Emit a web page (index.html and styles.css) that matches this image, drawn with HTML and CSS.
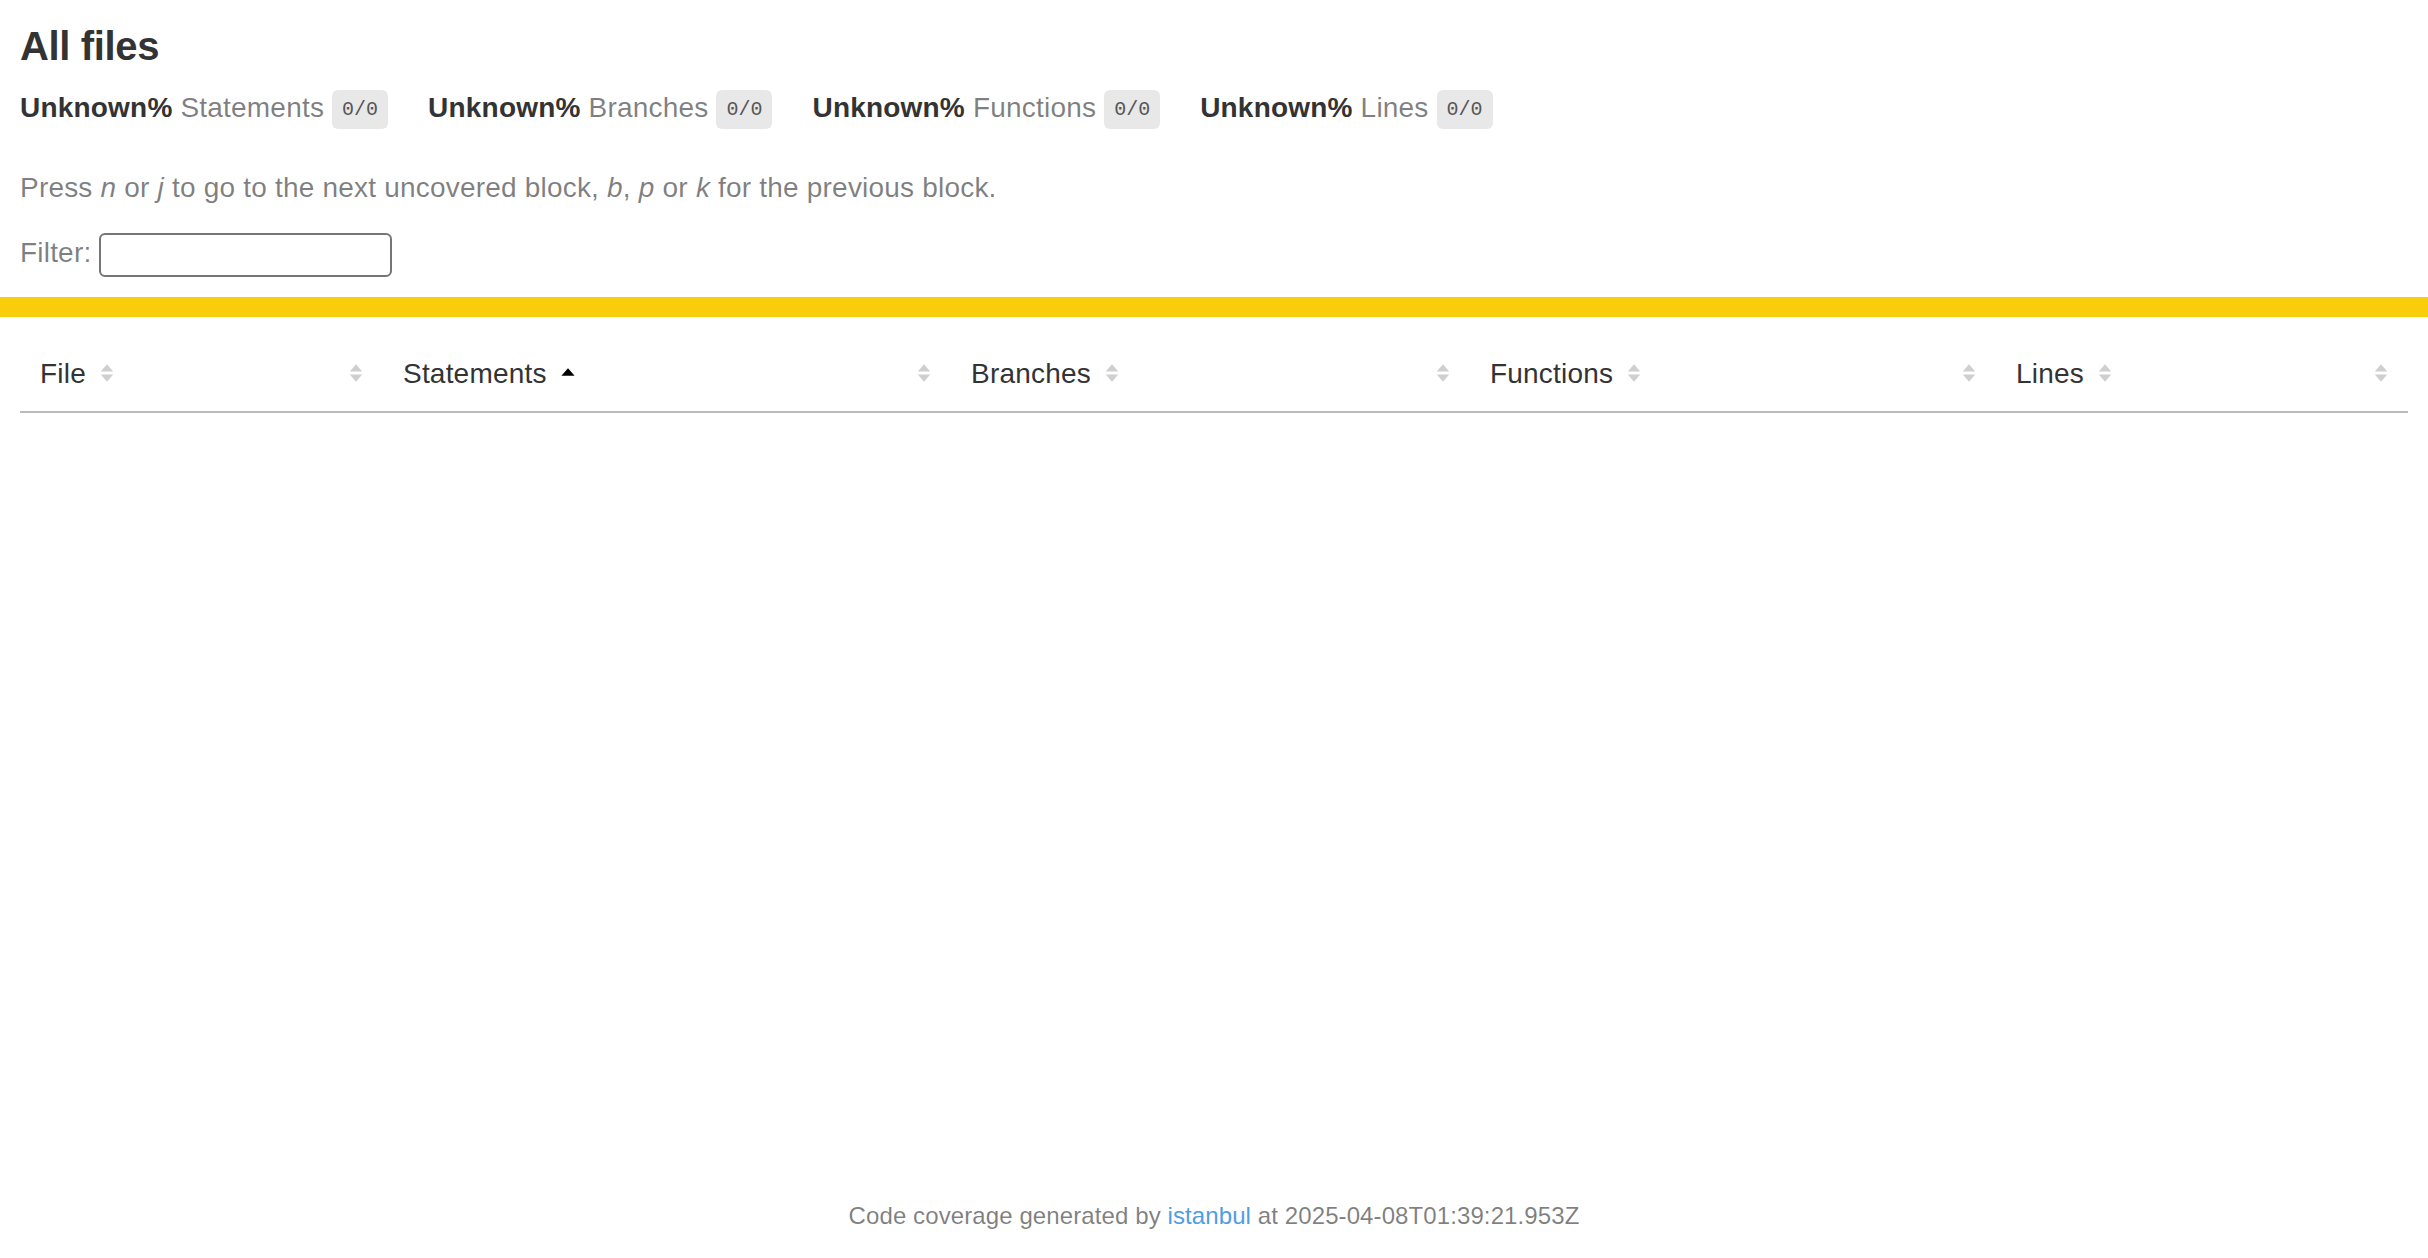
FILE: index.html
```html
<!doctype html>
<html lang="en">
<head>
<meta charset="utf-8">
<title>Code coverage report for All files</title>
<link rel="stylesheet" href="styles.css">
</head>
<body>
<div class="wrapper">
  <div class="pad1">
    <h1>All files</h1>
    <div class="clearfix">
      <div class="fl pad1y space-right2">
        <span class="strong">Unknown% </span>
        <span class="quiet">Statements</span>
        <span class="fraction">0/0</span>
      </div>
      <div class="fl pad1y space-right2">
        <span class="strong">Unknown% </span>
        <span class="quiet">Branches</span>
        <span class="fraction">0/0</span>
      </div>
      <div class="fl pad1y space-right2">
        <span class="strong">Unknown% </span>
        <span class="quiet">Functions</span>
        <span class="fraction">0/0</span>
      </div>
      <div class="fl pad1y space-right2">
        <span class="strong">Unknown% </span>
        <span class="quiet">Lines</span>
        <span class="fraction">0/0</span>
      </div>
    </div>
    <p class="quiet keys">
      Press <em>n</em> or <em>j</em> to go to the next uncovered block, <em>b</em>, <em>p</em> or <em>k</em> for the previous block.
    </p>
    <div class="quiet filter">
      Filter:
      <input type="search" class="file-search">
    </div>
  </div>
  <div class="status-line medium"></div>
  <div class="pad1">
    <table class="coverage-summary">
      <colgroup>
        <col class="c-file">
        <col class="c-pic">
        <col class="c-s-pct">
        <col class="c-s-abs">
        <col class="c-b-pct">
        <col class="c-b-abs">
        <col class="c-f-pct">
        <col class="c-f-abs">
        <col class="c-l-pct">
        <col class="c-l-abs">
      </colgroup>
      <thead>
        <tr>
          <th class="file">File<span class="sorter"><svg viewBox="0 0 7 10" width="14" height="20"><polygon class="ar" points="3.5,0.6 6.6,4.2 0.4,4.2"/><polygon class="ar" points="0.4,5.8 6.6,5.8 3.5,9.4"/></svg></span></th>
          <th class="pic"><span class="sorter"><svg viewBox="0 0 7 10" width="14" height="20"><polygon class="ar" points="3.5,0.6 6.6,4.2 0.4,4.2"/><polygon class="ar" points="0.4,5.8 6.6,5.8 3.5,9.4"/></svg></span></th>
          <th class="pct sorted">Statements<span class="sorter"><svg viewBox="0 0 7 10" width="14" height="20"><polygon class="ak" points="3.5,2.6 6.8,6.4 0.2,6.4"/></svg></span></th>
          <th class="abs"><span class="sorter"><svg viewBox="0 0 7 10" width="14" height="20"><polygon class="ar" points="3.5,0.6 6.6,4.2 0.4,4.2"/><polygon class="ar" points="0.4,5.8 6.6,5.8 3.5,9.4"/></svg></span></th>
          <th class="pct">Branches<span class="sorter"><svg viewBox="0 0 7 10" width="14" height="20"><polygon class="ar" points="3.5,0.6 6.6,4.2 0.4,4.2"/><polygon class="ar" points="0.4,5.8 6.6,5.8 3.5,9.4"/></svg></span></th>
          <th class="abs"><span class="sorter"><svg viewBox="0 0 7 10" width="14" height="20"><polygon class="ar" points="3.5,0.6 6.6,4.2 0.4,4.2"/><polygon class="ar" points="0.4,5.8 6.6,5.8 3.5,9.4"/></svg></span></th>
          <th class="pct">Functions<span class="sorter"><svg viewBox="0 0 7 10" width="14" height="20"><polygon class="ar" points="3.5,0.6 6.6,4.2 0.4,4.2"/><polygon class="ar" points="0.4,5.8 6.6,5.8 3.5,9.4"/></svg></span></th>
          <th class="abs"><span class="sorter"><svg viewBox="0 0 7 10" width="14" height="20"><polygon class="ar" points="3.5,0.6 6.6,4.2 0.4,4.2"/><polygon class="ar" points="0.4,5.8 6.6,5.8 3.5,9.4"/></svg></span></th>
          <th class="pct">Lines<span class="sorter"><svg viewBox="0 0 7 10" width="14" height="20"><polygon class="ar" points="3.5,0.6 6.6,4.2 0.4,4.2"/><polygon class="ar" points="0.4,5.8 6.6,5.8 3.5,9.4"/></svg></span></th>
          <th class="abs"><span class="sorter"><svg viewBox="0 0 7 10" width="14" height="20"><polygon class="ar" points="3.5,0.6 6.6,4.2 0.4,4.2"/><polygon class="ar" points="0.4,5.8 6.6,5.8 3.5,9.4"/></svg></span></th>
        </tr>
      </thead>
      <tbody></tbody>
    </table>
  </div>
  <div class="push"></div>
</div>
<div class="footer quiet pad2 center small">
  Code coverage generated by
  <a href="#">istanbul</a>
  at 2025-04-08T01:39:21.953Z
</div>
</body>
</html>
```

FILE: styles.css
```css
*, *:after, *:before { box-sizing: border-box; }
html, body { margin: 0; padding: 0; height: 100%; }
body {
  font-family: "Liberation Sans", Arial, Helvetica, sans-serif;
  font-size: 28px;
  letter-spacing: 0.2px;
  color: #333;
  background: #fff;
}
.small { font-size: 24px; letter-spacing: 0.1px; }
h1 { font-size: 40px; line-height: 52px; margin: 0; letter-spacing: -0.35px; }
a { color: #0074D9; text-decoration: none; }
.strong { font-weight: bold; }
.pad1y { padding: 20px 0; }
.pad2 { padding: 40px; }
.pad1 { padding: 20px; }
.space-right2 { padding-right: 40px; }
.center { text-align: center; }
.clearfix { display: block; }
.clearfix:after { content: ''; display: block; height: 0; clear: both; visibility: hidden; }
.fl { float: left; }
.quiet { color: rgba(0,0,0,0.5); }
.quiet a { opacity: 0.7; }
.fraction {
  font-family: "Liberation Mono", "DejaVu Sans Mono", monospace;
  font-size: 20px;
  letter-spacing: 0;
  color: #555;
  background: #E8E8E8;
  padding: 8px 10px;
  border-radius: 6px;
  vertical-align: middle;
}
.keys { margin: 28px 0 25px; }
.filter { line-height: 48px; }
.file-search {
  width: 293px;
  height: 44px;
  border: 2px solid #767676;
  border-radius: 6px;
  background: #fff;
  font-size: 26px;
  vertical-align: middle;
  margin: 0;
  padding: 2px 4px;
}
.status-line { height: 20px; }
.status-line.medium { background: #f9cd0b; }

.coverage-summary {
  border-collapse: collapse;
  width: 100%;
  table-layout: fixed;
}
.coverage-summary tr { border-bottom: 2px solid #bbb; }
.coverage-summary th {
  padding: 20px;
  line-height: 34px;
  text-align: left;
  font-weight: normal;
  white-space: nowrap;
}
.coverage-summary th.pic, .coverage-summary th.abs { text-align: right; }
.c-file { width: 180px; }
.c-pic { width: 183px; }
.c-s-pct { width: 284px; }
.c-s-abs { width: 284px; }
.c-b-pct { width: 260px; }
.c-b-abs { width: 259px; }
.c-f-pct { width: 263px; }
.c-f-abs { width: 263px; }
.c-l-pct { width: 206px; }
.c-l-abs { width: 206px; }
.sorter {
  display: inline-block;
  width: 14px;
  height: 20px;
  margin-left: 14px;
}
.sorter svg { display: block; }
.ar { fill: #cfcfcf; }
.ak { fill: #000; }

.wrapper {
  min-height: 100%;
  height: auto;
  margin: 0 auto -96px;
}
.footer, .push { height: 96px; }
```
